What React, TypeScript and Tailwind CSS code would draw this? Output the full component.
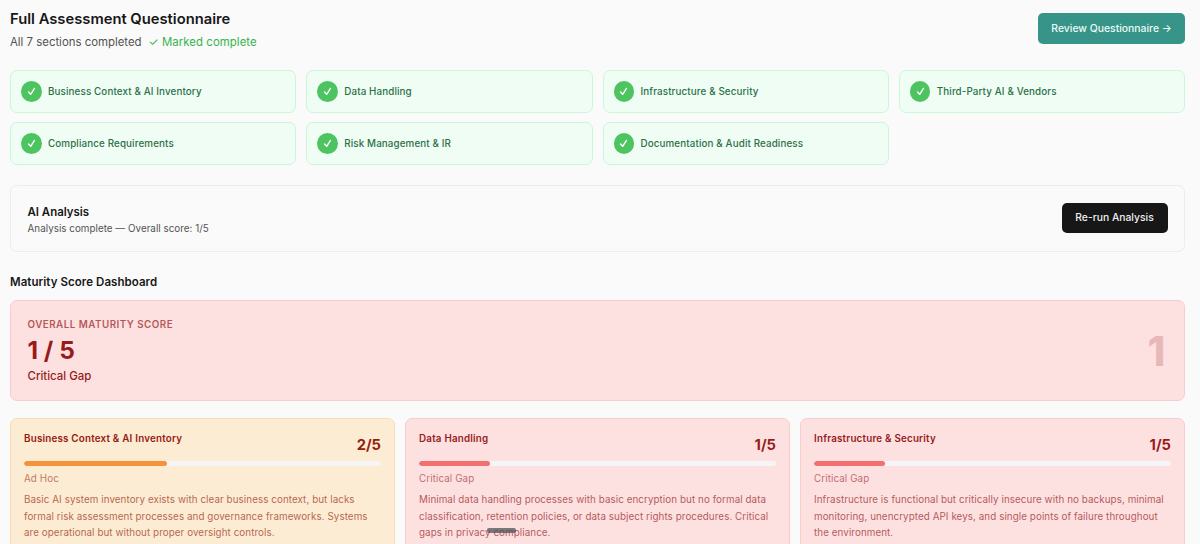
const sections = [
    'Business Context & AI Inventory',
    'Data Handling',
    'Infrastructure & Security',
    'Third-Party AI & Vendors',
    'Compliance Requirements',
    'Risk Management & IR',
    'Documentation & Audit Readiness',
]

type Score = {
    name: string
    score: number
    level: string
    lines: string[]
    card: string
    title: string
    bar: string
}

const scores: Score[] = [
    {
        name: 'Business Context & AI Inventory',
        score: 2,
        level: 'Ad Hoc',
        lines: [
            'Basic AI system inventory exists with clear business context, but lacks',
            'formal risk assessment processes and governance frameworks. Systems',
            'are operational but without proper oversight controls.',
        ],
        card: 'bg-[#fdecd4] border-[#fbdcb0] text-[#9a2c12]',
        title: 'text-[#95200f]',
        bar: 'bg-[#f6923a]',
    },
    {
        name: 'Data Handling',
        score: 1,
        level: 'Critical Gap',
        lines: [
            'Minimal data handling processes with basic encryption but no formal data',
            'classification, retention policies, or data subject rights procedures. Critical',
            'gaps in privacy compliance.',
        ],
        card: 'bg-[#fde1e1] border-[#fbcccc] text-[#981b1b]',
        title: 'text-[#981b1b]',
        bar: 'bg-[#f37070]',
    },
    {
        name: 'Infrastructure & Security',
        score: 1,
        level: 'Critical Gap',
        lines: [
            'Infrastructure is functional but critically insecure with no backups, minimal',
            'monitoring, unencrypted API keys, and single points of failure throughout',
            'the environment.',
        ],
        card: 'bg-[#fde1e1] border-[#fbcccc] text-[#981b1b]',
        title: 'text-[#981b1b]',
        bar: 'bg-[#f37070]',
    },
]

function SectionTile({ name }: { name: string }) {
    return (
        <div className="flex h-[42.5px] items-center gap-[6.5px] rounded-[7px] border border-[#c9f7d8] bg-[#f0fdf5] px-[10px]">
            <span className="flex size-[20.5px] shrink-0 items-center justify-center rounded-full bg-[#4dc45f]">
                <svg viewBox="0 0 10 10" className="mt-px size-[9px]" fill="none" stroke="white" strokeWidth="1.5" strokeLinecap="round" strokeLinejoin="round">
                    <path d="M1.7 5.6 4.1 8.2 8.3 1.6" />
                </svg>
            </span>
            <span className="pt-[2px] text-[9.8px] font-medium tracking-[0.013em] text-[#2b7146]">{name}</span>
        </div>
    )
}

function ScoreCard({ item }: { item: Score }) {
    return (
        <div className={`h-[140px] rounded-[7px] border px-[13px] pt-[13px] ${item.card}`}>
            <div className={`flex h-[24px] justify-between ${item.title}`}>
                <h4 className="text-[9.8px] leading-[14px] font-semibold tracking-[0.022em]">{item.name}</h4>
                <span className="pt-[2.5px] text-[14.7px] leading-[20px] font-bold">{item.score}/5</span>
            </div>
            <div className="mt-[5px] h-[5px] overflow-hidden rounded-full bg-[#f5f5f5]">
                <div className={`h-full rounded-full ${item.bar}`} style={{ width: `${item.score * 20}%` }} />
            </div>
            <p className="mt-[6px] text-[9.8px] leading-[14px] tracking-[0.01em] opacity-60">{item.level}</p>
            <div className="mt-[6px] text-[9.8px] leading-[16.6px] tracking-[0.008em] whitespace-nowrap opacity-70">
                {item.lines.map((line) => (
                    <p key={line}>{line}</p>
                ))}
            </div>
        </div>
    )
}

export default function App() {
    return (
        <main className="relative h-[544px] overflow-hidden bg-[#fafafa] pr-[15px] pl-[10px] font-['Inter',sans-serif] text-[#171717]">
            <header className="flex h-[70px] items-start justify-between">
                <div className="pt-[9px]">
                    <h1 className="text-[14.75px] leading-[20px] font-semibold">Full Assessment Questionnaire</h1>
                    <p className="mt-[5px] flex gap-[7px] text-[11.4px] leading-[17px] text-[#525252]">
                        <span>All 7 sections completed</span>
                        <span className="tracking-[0.005em] text-[#36b44e]">✓ Marked complete</span>
                    </p>
                </div>
                <button className="mt-[13px] h-[31px] w-[147px] rounded-[5px] bg-[#379488] text-[10.4px] font-medium text-[#e9fbf7]">
                    Review Questionnaire →
                </button>
            </header>

            <section className="grid grid-cols-4 gap-x-[10px] gap-y-[9.5px]">
                {sections.map((name) => (
                    <SectionTile key={name} name={name} />
                ))}
            </section>

            <section className="mt-[20.5px] flex h-[67px] items-center justify-between rounded-[7px] border border-[#ebeeee] px-[16.5px]">
                <div className="pt-[3px]">
                    <h2 className="text-[11.45px] leading-[17px] font-semibold">AI Analysis</h2>
                    <p className="text-[9.8px] leading-[16px] tracking-[0.004em] text-[#525252]">Analysis complete — Overall score: 1/5</p>
                </div>
                <button className="mb-[2px] h-[30px] w-[106px] rounded-[5px] bg-[#171717] pt-px text-[10.35px] font-medium text-[#f0f0f0]">Re-run Analysis</button>
            </section>

            <h2 className="mt-[20px] h-[28px] text-[11.5px] leading-[20px] font-semibold tracking-[0.005em]">Maturity Score Dashboard</h2>

            <section className="flex h-[101px] items-center justify-between rounded-[7px] border border-[#fbcccc] bg-[#fde1e1] pr-[18.5px] pl-[16.5px] text-[#981b1b]">
                <div className="pt-px">
                    <p className="text-[9.8px] leading-[14px] font-semibold tracking-[0.05em] opacity-70">OVERALL MATURITY SCORE</p>
                    <p className="mt-[2px] text-[24.5px] leading-[32px] font-bold">1 / 5</p>
                    <p className="mt-px text-[11.45px] leading-[18px] font-medium">Critical Gap</p>
                </div>
                <span className="pt-[3px] text-[40.5px] leading-none font-extrabold opacity-20">1</span>
            </section>

            <section className="mt-[17px] grid grid-cols-3 gap-[10px]">
                {scores.map((item) => (
                    <ScoreCard key={item.name} item={item} />
                ))}
            </section>

            {/* drag handle floating over the cards */}
            <div className="absolute top-[528px] left-[487px] h-[5px] w-[29px] rounded-[2px] bg-[#4f5256]/75" />
        </main>
    )
}
